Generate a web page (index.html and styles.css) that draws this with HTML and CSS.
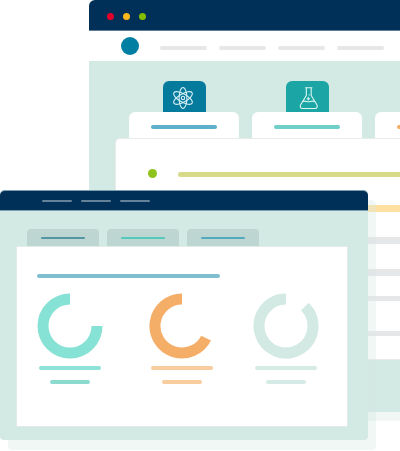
FILE: index.html
```
<!DOCTYPE html>
<html lang="en">
<head>
<meta charset="utf-8">
<title>Dashboard windows</title>
<link rel="stylesheet" href="styles.css">
</head>
<body>
<main class="scene">
  <section class="window back">
    <header class="titlebar">
      <i class="light red"></i><i class="light amber"></i><i class="light green"></i>
    </header>
    <nav class="toolbar">
      <i class="avatar"></i>
      <i class="line nav"></i><i class="line nav"></i><i class="line nav"></i><i class="line nav"></i>
    </nav>
    <div class="subjects">
      <div class="subject blue">
        <div class="badge">
          <svg width="22" height="24" viewBox="0 0 22 24" fill="none" stroke="#d9f0f5" stroke-width="1.1">
            <ellipse cx="10" cy="12" rx="3.900" ry="10.500"/>
            <ellipse cx="10" cy="12" rx="4.100" ry="10.500" transform="rotate(60 10 12)"/>
            <ellipse cx="10" cy="12" rx="4.100" ry="10.500" transform="rotate(120 10 12)"/>
            <circle cx="10" cy="12" r="1.700"/>
          </svg>
        </div>
        <div class="tab"><i class="line"></i></div>
      </div>
      <div class="subject teal">
        <div class="badge">
          <svg width="22" height="24" viewBox="0 0 22 24" fill="none" stroke="#dcf6f3" stroke-width="1.1" stroke-linecap="round" stroke-linejoin="round">
            <path d="M9.500 1.800h6.500M10.300 2v7.500L4.800 18.500c-1.200 2.200-.3 4 1.700 4h12.500c2 0 2.900-1.800 1.700-4L15.200 9.500V2"/>
            <path d="M6.800 15.500c2-1.300 4 .5 6 .3s3-1.300 5.800-.3"/>
            <path d="M11 12.700h2.600M12.300 11.400v2.600"/>
            <path d="M13.200 8.800v.2"/>
          </svg>
        </div>
        <div class="tab"><i class="line"></i></div>
      </div>
      <div class="subject orange">
        <div class="badge"></div>
        <div class="tab"><i class="line"></i></div>
      </div>
    </div>
    <div class="sheet">
      <div class="entry"><i class="bullet"></i><i class="line lime"></i></div>
      <i class="row yellow"></i>
      <i class="row"></i>
      <i class="row"></i>
      <i class="row thin"></i>
      <i class="row thin last"></i>
    </div>
  </section>

  <section class="window front">
    <header class="menubar"><i></i><i></i><i></i></header>
    <div class="tabs">
      <div class="small-tab slate"><i></i></div>
      <div class="small-tab mint"><i></i></div>
      <div class="small-tab sky"><i></i></div>
    </div>
    <div class="panel">
      <i class="line heading"></i>
      <div class="charts">
        <div class="chart aqua">
          <svg width="66" height="66" viewBox="0 0 66 66"><path d="M60 33A27 27 0 1 1 33 6"/></svg>
          <i class="line"></i><i class="line short"></i>
        </div>
        <div class="chart apricot">
          <svg width="66" height="66" viewBox="0 0 66 66"><path d="M57.1 45.1A27 27 0 1 1 33 6"/></svg>
          <i class="line"></i><i class="line short"></i>
        </div>
        <div class="chart pale">
          <svg width="66" height="66" viewBox="0 0 66 66"><path d="M51.8 13.600A27 27 0 1 1 33 6"/></svg>
          <i class="line"></i><i class="line short"></i>
        </div>
      </div>
    </div>
  </section>
</main>
</body>
</html>
```
FILE: styles.css
```
:root {
  --navy: #003057;
  --mist: #d3e9e3;
  --shade: rgba(211, 233, 227, 0.35);
}

* { box-sizing: border-box; }

body {
  margin: 0;
  background: #fff;
  font-family: "Liberation Sans", sans-serif;
}

i { display: block; flex: none; }

.scene {
  display: grid;
  overflow: hidden;
  padding-bottom: 11px;
}

.window {
  grid-area: 1 / 1;
  align-self: start;
  min-width: 0;
  background: var(--mist);
}

.line { height: 4px; border-radius: 2px; }

/* Back window */
.back {
  margin-left: 89px;
  padding-bottom: 52px;
  border-radius: 6px 0 0 4px;
  box-shadow: 8px 9px 0 var(--shade);
}

.titlebar {
  display: flex;
  align-items: center;
  gap: 9px;
  height: 31px;
  padding: 2px 0 0 18px;
  background: var(--navy);
  border-bottom: 1px solid #5f7d99;
  border-top-left-radius: 6px;
}

.light { width: 7px; height: 7px; border-radius: 50%; }
.red { background: #e4002b; }
.amber { background: #ffb81c; }
.green { background: #84bd00; }

.toolbar {
  display: flex;
  align-items: center;
  gap: 12px;
  height: 30px;
  padding-left: 32px;
  background: #fff;
  overflow: hidden;
}

.avatar {
  width: 18px;
  height: 18px;
  margin-right: 9px;
  border-radius: 50%;
  background: #007fa3;
}

.nav { width: 47px; margin-top: 4px; background: #e7e7e7; }

.subjects {
  display: flex;
  gap: 13px;
  padding: 20px 0 0 40px;
  overflow: hidden;
}

.subject { flex: none; width: 110px; }

.badge {
  display: flex;
  justify-content: center;
  align-items: center;
  width: 43px;
  height: 31px;
  margin: 0 auto;
  padding-top: 3px;
  border-radius: 6px 6px 0 0;
}

.blue .badge { background: #047a9c; }
.teal .badge { background: #1ba5a4; }

.tab {
  display: flex;
  justify-content: center;
  height: 26px;
  padding-top: 13px;
  border-radius: 6px 6px 0 0;
  background: #fff;
}

.tab .line { width: 66px; }
.blue .line { background: #5fb0ca; }
.teal .line { background: #6ed0c9; }
.orange .line { background: #f4ae68; }

.sheet {
  height: 222px;
  margin-left: 26px;
  padding-top: 30px;
  border: solid #e8ebea;
  border-width: 1px 0 1px 1px;
  border-top-left-radius: 5px;
  background: #fff;
}

.entry { display: flex; align-items: center; gap: 21px; padding-left: 32px; }
.bullet { width: 9px; height: 9px; border-radius: 50%; background: #8ec31c; }
.lime { flex: 1; height: 5px; margin-top: 2px; border-radius: 3px 0 0 3px; background: #d8da89; }

.row { height: 7px; margin-top: 25px; background: #e6e7e8; }
.row.yellow { margin-top: 27px; background: #ffe0a0; }
.row.thin { height: 5px; margin-top: 20px; }
.row.last { margin-top: 30px; }

/* Front window */
.front {
  margin: 190px 32px 0 0;
  padding-bottom: 13px;
  border-radius: 5px 5px 4px 4px;
  box-shadow: 8px 10px 0 var(--shade);
}

.menubar {
  display: flex;
  align-items: center;
  gap: 9px;
  height: 21px;
  padding-left: 42px;
  background: var(--navy);
  border: solid #7f9fae;
  border-width: 1px 0;
  border-radius: 5px 5px 0 0;
}

.menubar i { width: 30px; height: 2px; border-radius: 1px; background: #668299; }

.tabs { display: flex; gap: 8px; padding: 18px 0 0 27px; }

.small-tab {
  width: 72px;
  height: 17px;
  padding: 8px 14px 0;
  border-radius: 4px 4px 0 0;
  background: #bdd6d2;
}

.small-tab i { height: 2px; border-radius: 1px; }
.slate i { background: #5596a3; }
.mint i { background: #55c9bb; }
.sky i { background: #55a9bd; }

.panel {
  height: 181px;
  margin: 0 20px 0 16px;
  padding: 27px 20px 0;
  border: 1px solid #e3ebe8;
  background: #fff;
}

.heading { width: 183px; background: #7fbfd1; }

.charts {
  display: grid;
  grid-template-columns: 112px 104px 66px;
  margin-top: 15px;
}

.chart {
  display: flex;
  flex-direction: column;
  align-items: center;
  width: 66px;
}

.chart svg { display: block; fill: none; stroke-width: 11px; }
.chart .line { width: 62px; margin-top: 7px; }
.chart .short { width: 40px; margin-top: 10px; }

.aqua svg { stroke: #86e2d5; }
.aqua .line { background: #8ee2d7; }
.aqua .short { background: #8cd9ce; }
.apricot svg { stroke: #f4ae68; }
.apricot .line { background: #f9cc9e; }
.pale svg { stroke: var(--mist); }
.pale .line { background: #d6ebe5; }
```
